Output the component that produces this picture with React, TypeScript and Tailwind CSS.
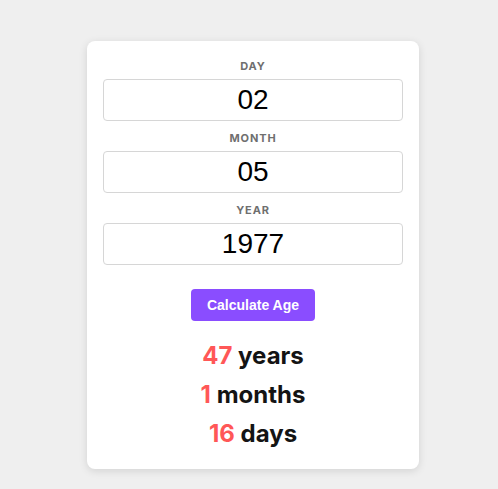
import React from "react";

const fields = [
  { label: "DAY", value: "02" },
  { label: "MONTH", value: "05" },
  { label: "YEAR", value: "1977" },
];

const results = [
  { n: "47", u: "years" },
  { n: "1", u: "months" },
  { n: "16", u: "days" },
];

export default function App() {
  return (
    <div className="min-h-[489px] w-full bg-[#efefef] pt-[41px]" style={{ fontFamily: "'Liberation Sans', Arial, sans-serif" }}>
      <div className="mx-auto ml-[87px] w-[332px] h-[428px] rounded-[8px] bg-white shadow-[0_2px_8px_rgba(0,0,0,0.12)] px-4 pt-[17px]">
        <div className="flex flex-col gap-[9px]">
          {fields.map((f) => (
            <div key={f.label} className="flex flex-col items-center">
              <div
                className="h-[16px] leading-[16px] text-[11px] font-bold tracking-[0.08em] text-[#6f6f6f]"
                style={{ fontFamily: "Inter, 'Open Sans', sans-serif" }}
              >
                {f.label}
              </div>
              <div className="mt-[5px] h-[42px] w-[300px] rounded-[4px] border border-[#d6d6d6] flex items-center justify-center text-[28px] text-black leading-none">
                {f.value}
              </div>
            </div>
          ))}
        </div>
        <div className="flex justify-center mt-[24px]">
          <button className="h-[32px] w-[124px] rounded-[4px] bg-[#8a4dff] text-white text-[14px] font-bold">
            Calculate Age
          </button>
        </div>
        <div
          className="mt-[15px] flex flex-col items-center text-[24px] font-bold leading-[39px] text-[#141414]"
          style={{ fontFamily: "Inter, 'Open Sans', sans-serif" }}
        >
          {results.map((r) => (
            <div key={r.u}>
              <span className="text-[#ff5757]">{r.n}</span> {r.u}
            </div>
          ))}
        </div>
      </div>
    </div>
  );
}
